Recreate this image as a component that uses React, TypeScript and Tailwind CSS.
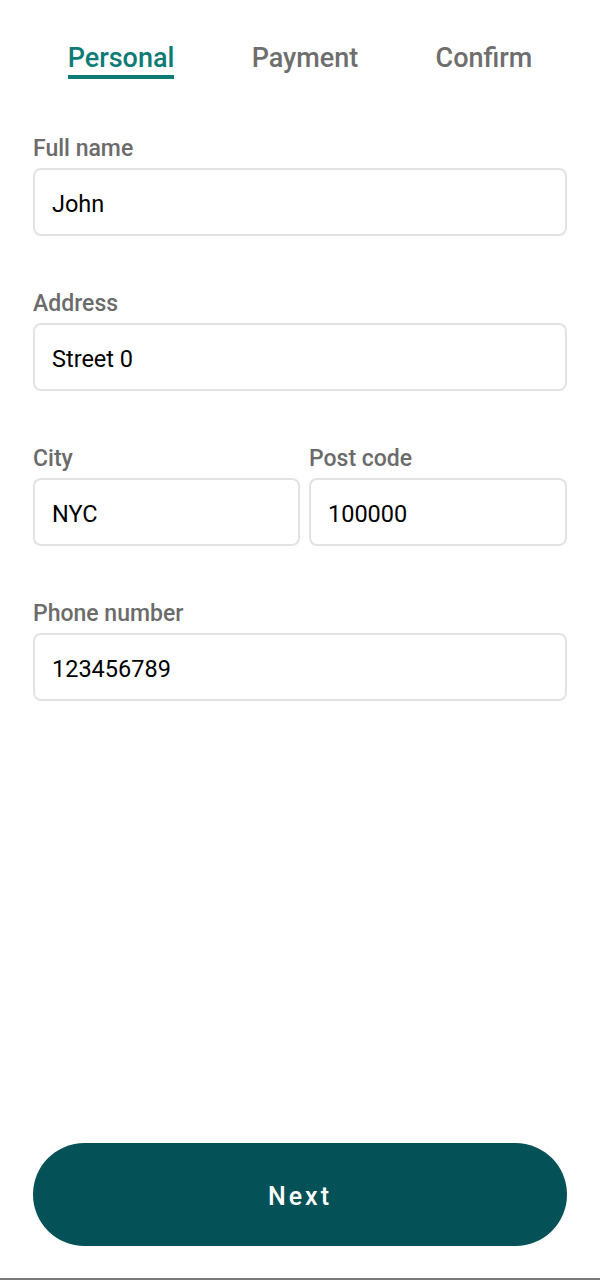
const font = { fontFamily: 'Roboto, "Noto Sans", sans-serif' };

function Field({ label, value }: { label: string; value: string }) {
  return (
    <div className="flex flex-col flex-1 min-w-0">
      <label className="text-[23px] font-medium text-[#6b6b6b] leading-none h-[31px]">{label}</label>
      <div className="h-[68px] rounded-[8px] border-2 border-[#e2e2e2] flex items-center px-[17px] pt-[5px] text-[23.5px] text-black">
        {value}
      </div>
    </div>
  );
}

export default function App() {
  const tabs = ['Personal', 'Payment', 'Confirm'];
  return (
    <div style={font} className="w-[600px] h-[1280px] bg-white flex flex-col">
      <div className="flex justify-around px-[29px] pt-[42px]">
        {tabs.map((t, i) => (
          <div key={t} className="flex flex-col items-center">
            <span className={`text-[27px] font-medium leading-[32px] ${i === 0 ? 'text-[#0d7b76]' : 'text-[#6e6e6e]'}`}>{t}</span>
            <div className={`h-[4px] w-full mt-[1px] ${i === 0 ? 'bg-[#0d7b76]' : 'bg-transparent'}`}></div>
          </div>
        ))}
      </div>

      <div className="px-[33px] pt-[58px] flex flex-col gap-[56px]">
        <Field label="Full name" value="John" />
        <Field label="Address" value="Street 0" />
        <div className="flex gap-[9px]">
          <div className="w-[267px]">
            <Field label="City" value="NYC" />
          </div>
          <Field label="Post code" value="100000" />
        </div>
        <Field label="Phone number" value="123456789" />
      </div>

      <div className="mt-auto px-[33px] pb-[32px]">
        <button className="w-full h-[103px] rounded-full bg-[#045258] text-white text-[25px] font-medium tracking-[3px] pt-[4px]">
          Next
        </button>
      </div>
      <div className="h-[2px] bg-[#7a7a7a]"></div>
    </div>
  );
}
